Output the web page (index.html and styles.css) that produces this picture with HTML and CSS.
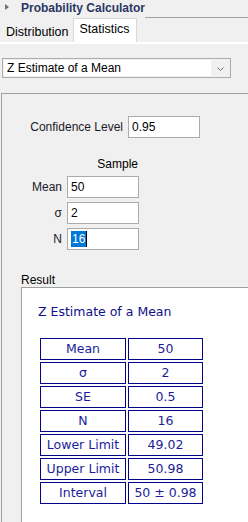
FILE: index.html
```html
<!DOCTYPE html>
<html lang="en">
<head>
  <meta charset="UTF-8">
  <title>Probability Calculator</title>
  <link rel="stylesheet" href="styles.css">
</head>
<body>

  <div class="titlebar">
    <span class="caret-right"></span>
    <span class="title">Probability Calculator</span>
    <span class="title-line"></span>
  </div>

  <div class="tabs">
    <div class="tab">Distribution</div>
    <div class="tab active">Statistics</div>
    <div class="tab-rest"></div>
  </div>
  <div class="tab-strip"></div>

  <div class="combo-row">
    <div class="combo">
      <span class="combo-text">Z Estimate of a Mean</span>
      <span class="combo-btn">
        <svg width="7" height="4" viewBox="0 0 7 4"><polyline points="0.5,0.5 3.5,3.5 6.5,0.5" fill="none" stroke="#6b6b6b" stroke-width="1"/></svg>
      </span>
    </div>
  </div>

  <div class="panel">
    <div class="conf-row">
      <label class="conf-label">Confidence Level</label>
      <div class="field">0.95</div>
    </div>

    <div class="sample">
      <div></div>
      <div class="sample-head">Sample</div>
      <label class="lbl">Mean</label>
      <div class="field">50</div>
      <label class="lbl">σ</label>
      <div class="field">2</div>
      <label class="lbl">N</label>
      <div class="field"><span class="sel">16</span><span class="cursor"></span></div>
    </div>

    <div class="result-label">Result</div>
    <div class="result">
      <div class="result-title">Z Estimate of a Mean</div>
      <div class="result-table">
        <div class="cell">Mean</div><div class="cell">50</div>
        <div class="cell">σ</div><div class="cell">2</div>
        <div class="cell">SE</div><div class="cell">0.5</div>
        <div class="cell">N</div><div class="cell">16</div>
        <div class="cell">Lower Limit</div><div class="cell">49.02</div>
        <div class="cell">Upper Limit</div><div class="cell">50.98</div>
        <div class="cell">Interval</div><div class="cell">50 ± 0.98</div>
      </div>
    </div>
  </div>

</body>
</html>
```

FILE: styles.css
```css
* {
  box-sizing: border-box;
}

html, body {
  margin: 0;
  height: 100%;
  overflow: hidden;
}

body {
  background-color: #f0f0f0;
  font-family: "Liberation Sans", Arial, sans-serif;
  font-size: 12px;
  color: #000;
  display: flex;
  flex-direction: column;
}

/* title bar */
.titlebar {
  height: 18px;
  flex-shrink: 0;
  display: flex;
  align-items: stretch;
}

.caret-right {
  width: 0;
  height: 0;
  margin: 4px 0 0 5px;
  border-top: 3.5px solid transparent;
  border-bottom: 3.5px solid transparent;
  border-left: 4px solid #707070;
}

.title {
  margin-left: 12px;
  font-weight: bold;
  color: #2b3764;
  line-height: 16px;
}

.title-line {
  flex: 1;
  border-bottom: 1px solid #a0a0a0;
}

/* tabs */
.tabs {
  display: flex;
  flex-shrink: 0;
  height: 24px;
  align-items: flex-end;
}

.tab {
  height: 21px;
  padding: 0 5px 0 6px;
  line-height: 22px;
  font-size: 12.5px;
}

.tab.active {
  height: 24px;
  margin-left: -1px;
  padding: 0 6px 0 6px;
  line-height: 20px;
  background-color: #fff;
  border: 1px solid #d9d9d9;
  border-bottom: none;
}

.tab-rest {
  flex: 1;
}

.tab-strip {
  height: 2px;
  flex-shrink: 0;
  background-color: #fff;
}

/* combo box */
.combo-row {
  flex-shrink: 0;
  padding: 14px 0 0 2px;
}

.combo {
  width: 229px;
  height: 20px;
  border: 1px solid #acacac;
  display: flex;
  background-color: #f0f0f0;
}

.combo-text {
  flex: 1;
  background-color: #fff;
  margin: 1px 0 1px 1px;
  padding-left: 3px;
  line-height: 16px;
}

.combo-btn {
  width: 19px;
  display: flex;
  align-items: center;
  justify-content: center;
  padding-top: 1px;
}

/* main panel */
.panel {
  flex: 1;
  min-height: 0;
  display: flex;
  flex-direction: column;
  margin: 15px 0 0 1px;
  border-top: 1px solid #a0a0a0;
  border-left: 1px solid #a0a0a0;
}

.conf-row {
  display: flex;
  align-items: center;
  margin-top: 22px;
}

.conf-label {
  width: 121px;
  text-align: right;
  margin-right: 5px;
  color: #1a1a2a;
}

.field {
  width: 72px;
  height: 22px;
  background-color: #fff;
  border: 1px solid #ababab;
  padding-left: 3px;
  line-height: 20px;
  display: flex;
  align-items: center;
}

.sample {
  display: grid;
  grid-template-columns: 60px 72px;
  column-gap: 5px;
  row-gap: 4px;
  margin-top: 19px;
  align-items: center;
}

.sample-head {
  text-align: right;
  padding-right: 1px;
  line-height: 14px;
  margin-bottom: 1px;
}

.lbl {
  text-align: right;
  color: #1a1a2a;
}

.sel {
  background-color: #0078d7;
  color: #fff;
  line-height: 16px;
  padding: 0 1px;
}

.cursor {
  width: 1px;
  height: 16px;
  background-color: #000;
}

/* result */
.result-label {
  margin: 23px 0 0 19px;
  line-height: 14px;
}

.result {
  flex: 1;
  min-height: 0;
  margin-left: 19px;
  border-top: 1px solid #a0a0a0;
  border-left: 1px solid #a0a0a0;
  background-color: #fff;
  padding: 16px 0 0 16px;
  font-family: "DejaVu Sans", Verdana, sans-serif;
  font-size: 12.5px;
  color: #10108a;
}

.result-title {
  line-height: 16px;
}

.result-table {
  display: grid;
  grid-template-columns: 86px 75px;
  grid-auto-rows: 22px;
  gap: 2px;
  margin: 18px 0 0 2px;
}

.cell {
  border: 1px solid #00008b;
  text-align: center;
  line-height: 20px;
  color: #1c1c9a;
}
```
